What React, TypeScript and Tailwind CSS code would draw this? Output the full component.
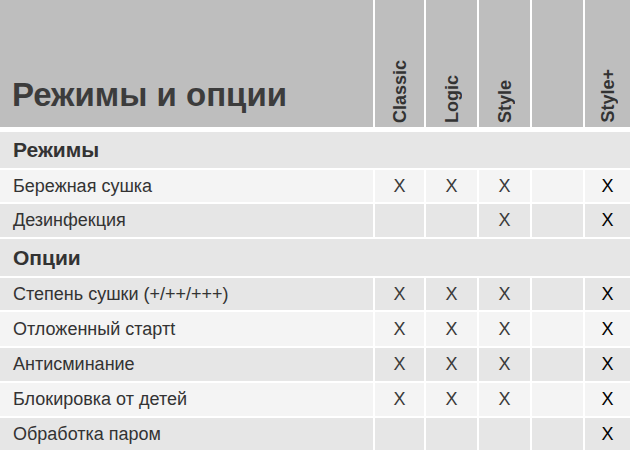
const font = { fontFamily: '"Liberation Sans", Arial, sans-serif' };

type Row = { label: string; marks: boolean[]; h: string; dark: boolean };

const modes: Row[] = [
  { label: "Бережная сушка", marks: [true, true, true, false, true], h: "h-[32px]", dark: false },
  { label: "Дезинфекция", marks: [false, false, true, false, true], h: "h-[33px]", dark: true },
];

const options: Row[] = [
  { label: "Степень сушки (+/++/+++)", marks: [true, true, true, false, true], h: "h-[32px]", dark: true },
  { label: "Отложенный стартt", marks: [true, true, true, false, true], h: "h-[34px]", dark: false },
  { label: "Антисминание", marks: [true, true, true, false, true], h: "h-[33px]", dark: true },
  { label: "Блокировка от детей", marks: [true, true, true, false, true], h: "h-[33px]", dark: false },
  { label: "Обработка паром", marks: [false, false, false, false, true], h: "h-[32px]", dark: true },
];

const models = ["Classic", "Logic", "Style", "", "Style+"];

function DataRow({ row }: { row: Row }) {
  const bg = row.dark ? "bg-[#e6e6e6]" : "bg-[#f4f4f4]";
  return (
    <div className={`grid grid-cols-[373px_49px_51px_51px_51px_1fr] gap-x-[2px] ${row.h}`}>
      <div className={`${bg} flex items-center pl-[13px] text-[18px] text-[#333333]`}>{row.label}</div>
      {row.marks.map((m, i) => (
        <div
          key={i}
          className={`${bg} flex items-center justify-center text-[18px] ${i === 4 ? "text-black" : "text-[#3a3a3a]"}`}
        >
          {m ? "X" : ""}
        </div>
      ))}
    </div>
  );
}

function Section({ title, h }: { title: string; h: string }) {
  return (
    <div className={`${h} bg-[#e6e6e6] flex items-center pl-[13px] text-[21px] font-bold text-[#333333]`}>
      {title}
    </div>
  );
}

export default function App() {
  return (
    <div className="w-[630px] h-[450px] overflow-hidden bg-white flex flex-col" style={font}>
      <div className="grid grid-cols-[373px_49px_51px_51px_51px_1fr] gap-x-[2px] h-[127px] shrink-0">
        <div className="bg-[#bebebe] flex items-end pl-[12px] pb-[16px]">
          <span className="text-[33px] font-bold leading-none text-[#3c3c3c]">Режимы и опции</span>
        </div>
        {models.map((m, i) => (
          <div key={i} className="bg-[#bebebe] flex items-end justify-center pb-[4px]">
            {m && (
              <span className="[writing-mode:vertical-rl] rotate-180 text-[18px] font-bold leading-none text-[#333333]">
                {m}
              </span>
            )}
          </div>
        ))}
      </div>
      <div className="mt-[5px] flex flex-col gap-y-[2px]">
        <Section title="Режимы" h="h-[36px]" />
        {modes.map((r) => (
          <DataRow key={r.label} row={r} />
        ))}
        <Section title="Опции" h="h-[37px]" />
        {options.map((r) => (
          <DataRow key={r.label} row={r} />
        ))}
      </div>
    </div>
  );
}
